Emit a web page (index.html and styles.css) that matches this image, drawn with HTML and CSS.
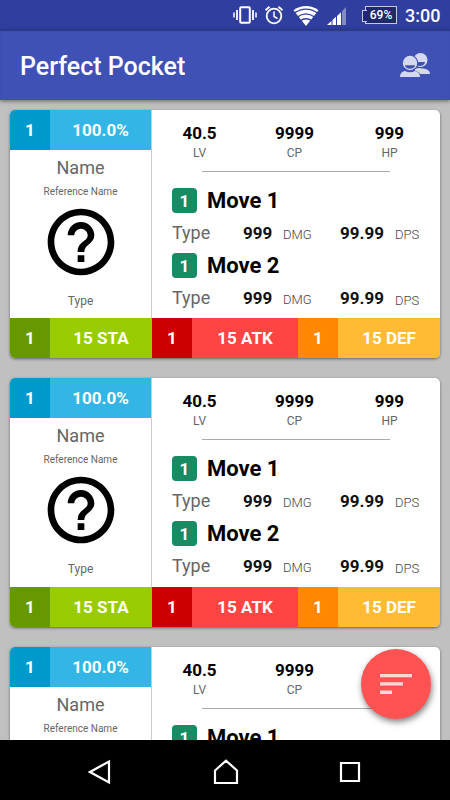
FILE: index.html
```
<!DOCTYPE html>
<html lang="en">
<head>
    <meta charset="UTF-8">
    <meta name="viewport" content="width=device-width, initial-scale=1.0">
    <title>Perfect Pocket</title>
    <link rel="stylesheet" href="styles.css">
</head>
<body>

    <div class="statusbar">
        <svg class="vibrate" width="24" height="20" viewBox="0 0 24 20" fill="none" stroke="#fff">
            <rect x="7.2" y="2.2" width="9.6" height="15.6" rx="1" stroke-width="2"/>
            <path d="M4 5v10M20 5v10" stroke-width="1.8"/>
            <path d="M1 7.5v5M23 7.5v5" stroke-width="1.5"/>
        </svg>
        <svg class="alarm" width="20" height="20" viewBox="0 0 20 20" fill="none" stroke="#fff">
            <circle cx="10" cy="11" r="7.3" stroke-width="1.8"/>
            <path d="M10 6.5v5l3.5 2" stroke-width="1.5"/>
            <path d="M1.5 5.3l4-3.5M18.5 5.3l-4-3.5" stroke-width="1.8"/>
        </svg>
        <svg class="wifi" width="26" height="20" viewBox="0 0 26 20">
            <path d="M13 20L.5 4.2Q13-4.2 25.5 4.2z" fill="#fff"/>
            <path d="M1 7.2Q13-1 25 7.2M4 11.2Q13 4.5 22 11.2M7 15Q13 10.5 19 15" fill="none" stroke="#303f9f" stroke-width="1.4"/>
        </svg>
        <svg class="signal" width="20" height="20" viewBox="0 0 20 20" fill="#fff">
            <path d="M0 19l4.5-4v4zM5.5 14l3.5-3.2V19H5.5zM10 10l4-3.7V19h-4z"/>
            <path d="M15 5.3L19 1v18h-4z" opacity=".4"/>
        </svg>
        <div class="battery">69%</div>
        <div class="clock">3:00</div>
    </div>

    <div class="toolbar">
        <h1>Perfect Pocket</h1>
        <svg width="30" height="26" viewBox="0 0 30 26">
            <g fill="#d5d9ef">
                <circle cx="20.5" cy="8" r="7"/>
                <path d="M15 22v-5q3-1.500 8-.5c4 .5 7 2 7 5.500z"/>
            </g>
            <path d="M15 10h10a5 4 0 0 1-10 0z" fill="#3f51b5"/>
            <circle cx="10" cy="11" r="8.2" fill="#3f51b5"/>
            <path d="M10 18c6 0 10.800 2 10.800 7H10z" fill="#3f51b5"/>
            <g fill="#d5d9ef">
                <circle cx="10" cy="11" r="7.200"/>
                <path d="M0 25c0-4 2.500-5.500 5-6q5 2.400 10 0c2.500.5 5 2 5 6z"/>
            </g>
            <path d="M5 13.200h10a5 3.600 0 0 1-10 0z" fill="#3f51b5"/>
        </svg>
    </div>

    <div class="list">
        <div class="card">
            <div class="main">
                <div class="left">
                    <div class="perfection"><span class="rank">1</span><span class="percent">100.0%</span></div>
                    <div class="name">Name</div>
                    <div class="reference">Reference Name</div>
                    <svg class="unknown" viewBox="0 0 24 24"><path d="M11 18h2v-2h-2v2zm1-16C6.480 2 2 6.480 2 12s4.480 10 10 10 10-4.480 10-10S17.520 2 12 2zm0 18c-4.410 0-8-3.590-8-8s3.590-8 8-8 8 3.590 8 8-3.590 8-8 8zm0-14c-2.210 0-4 1.790-4 4h2c0-1.100.9-2 2-2s2 .9 2 2c0 2-3 1.750-3 5h2c0-2.250 3-2.500 3-5 0-2.210-1.790-4-4-4z"/></svg>
                    <div class="type">Type</div>
                </div>
                <div class="right">
                    <div class="stats">
                        <div><b>40.5</b><span>LV</span></div>
                        <div><b>9999</b><span>CP</span></div>
                        <div><b>999</b><span>HP</span></div>
                    </div>
                    <div class="divider"></div>
                    <div class="move"><span class="badge">1</span>Move 1</div>
                    <div class="damage"><span>Type</span><b>999</b><small>DMG</small><b>99.99</b><small>DPS</small></div>
                    <div class="move"><span class="badge">1</span>Move 2</div>
                    <div class="damage last"><span>Type</span><b>999</b><small>DMG</small><b>99.99</b><small>DPS</small></div>
                </div>
            </div>
            <div class="ivs">
                <span class="sta-rank">1</span><span class="sta">15 STA</span>
                <span class="atk-rank">1</span><span class="atk">15 ATK</span>
                <span class="def-rank">1</span><span class="def">15 DEF</span>
            </div>
        </div>

        <div class="card">
            <div class="main">
                <div class="left">
                    <div class="perfection"><span class="rank">1</span><span class="percent">100.0%</span></div>
                    <div class="name">Name</div>
                    <div class="reference">Reference Name</div>
                    <svg class="unknown" viewBox="0 0 24 24"><path d="M11 18h2v-2h-2v2zm1-16C6.480 2 2 6.480 2 12s4.480 10 10 10 10-4.480 10-10S17.520 2 12 2zm0 18c-4.410 0-8-3.590-8-8s3.590-8 8-8 8 3.590 8 8-3.590 8-8 8zm0-14c-2.210 0-4 1.790-4 4h2c0-1.100.9-2 2-2s2 .9 2 2c0 2-3 1.750-3 5h2c0-2.250 3-2.500 3-5 0-2.210-1.790-4-4-4z"/></svg>
                    <div class="type">Type</div>
                </div>
                <div class="right">
                    <div class="stats">
                        <div><b>40.5</b><span>LV</span></div>
                        <div><b>9999</b><span>CP</span></div>
                        <div><b>999</b><span>HP</span></div>
                    </div>
                    <div class="divider"></div>
                    <div class="move"><span class="badge">1</span>Move 1</div>
                    <div class="damage"><span>Type</span><b>999</b><small>DMG</small><b>99.99</b><small>DPS</small></div>
                    <div class="move"><span class="badge">1</span>Move 2</div>
                    <div class="damage last"><span>Type</span><b>999</b><small>DMG</small><b>99.99</b><small>DPS</small></div>
                </div>
            </div>
            <div class="ivs">
                <span class="sta-rank">1</span><span class="sta">15 STA</span>
                <span class="atk-rank">1</span><span class="atk">15 ATK</span>
                <span class="def-rank">1</span><span class="def">15 DEF</span>
            </div>
        </div>

        <div class="card">
            <div class="main">
                <div class="left">
                    <div class="perfection"><span class="rank">1</span><span class="percent">100.0%</span></div>
                    <div class="name">Name</div>
                    <div class="reference">Reference Name</div>
                </div>
                <div class="right">
                    <div class="stats">
                        <div><b>40.5</b><span>LV</span></div>
                        <div><b>9999</b><span>CP</span></div>
                        <div><b>999</b><span>HP</span></div>
                    </div>
                    <div class="divider"></div>
                    <div class="move"><span class="badge">1</span>Move 1</div>
                </div>
            </div>
        </div>

        <button class="fab" aria-label="Sort">
            <svg width="32" height="20" viewBox="0 0 32 20" fill="#ffd9d9"><path d="M0 0h32v3.300H0zM0 8.300h23v3.300H0zM0 16.600h12v3.400H0z"/></svg>
        </button>
    </div>

    <div class="navbar">
        <svg width="24" height="26" viewBox="0 0 24 26"><path d="M21 2.500v21L2 13z"/></svg>
        <svg width="26" height="26" viewBox="0 0 26 26"><path d="M2 11.500L13 1.700l11 9.800V24H2z"/></svg>
        <svg width="22" height="22" viewBox="0 0 22 22"><path d="M2 2h18v18H2z"/></svg>
    </div>

</body>
</html>
```

FILE: styles.css
```
* {
    box-sizing: border-box;
}
body {
    margin: 0;
    height: 800px;
    display: flex;
    flex-direction: column;
    overflow: hidden;
    font-family: Roboto, sans-serif;
    background-color: #c0c0c0;
}
svg {
    display: block;
    flex: none;
}
.statusbar {
    height: 30px;
    flex: none;
    display: flex;
    align-items: center;
    padding-left: 233px;
    background-color: #303f9f;
    color: #fff;
}
.alarm {
    margin-left: 7px;
}
.wifi {
    margin-left: 9px;
    margin-top: 2px;
}
.signal {
    margin-left: 8px;
    margin-top: 2px;
}
.battery {
    width: 32px;
    height: 18px;
    margin-left: 18px;
    border: 1px solid #c5c9e5;
    background-color: #20296b;
    font-size: 12px;
    font-weight: 500;
    line-height: 17px;
    text-align: center;
    position: relative;
}
.battery::before {
    content: "";
    position: absolute;
    left: -4px;
    top: 3px;
    width: 4px;
    height: 10px;
    border: 1px solid #c5c9e5;
    border-right: 0;
    background-color: #20296b;
}
.clock {
    margin-left: 8px;
    font-size: 18px;
    font-weight: 500;
}
.toolbar {
    height: 70px;
    flex: none;
    display: flex;
    align-items: center;
    justify-content: space-between;
    padding: 0 20px;
    background-color: #3f51b5;
    box-shadow: inset 0 1px 1px #2b3887, 0 1px 4px rgba(0, 0, 0, 0.5);
    z-index: 1;
}
.toolbar h1 {
    margin: 3px 0 0;
    color: #fff;
    font-size: 25px;
    font-weight: 500;
}
.list {
    position: relative;
    height: 640px;
    flex: none;
    display: flex;
    flex-direction: column;
    gap: 20px;
    padding: 10px;
    overflow: hidden;
}
.card {
    height: 248.4px;
    flex: none;
    display: flex;
    flex-direction: column;
    border-radius: 5px;
    overflow: hidden;
    background-color: #fff;
    box-shadow: 0 1px 3px rgba(0, 0, 0, 0.5);
}
.main {
    flex: 1;
    display: flex;
}
.left {
    width: 142px;
    border-right: 1px solid #ccc;
    color: #666;
    text-align: center;
}
.perfection {
    display: flex;
    height: 40px;
    line-height: 41px;
    color: #fff;
    font-size: 17px;
    font-weight: 700;
}
.rank {
    width: 40px;
    background-color: #0099cc;
}
.percent {
    flex: 1;
    background-color: #33b5e5;
}
.name {
    margin-top: 6px;
    font-size: 18px;
    line-height: 24px;
}
.reference {
    margin-top: 5px;
    font-size: 10px;
    line-height: 14px;
}
.unknown {
    width: 80px;
    height: 80px;
    margin: 3px auto 0;
}
.type {
    margin-top: 11px;
    font-size: 12px;
    line-height: 16px;
}
.right {
    flex: 1;
}
.stats {
    display: grid;
    grid-template-columns: repeat(3, 1fr);
    padding: 12px 3px 0 0;
    text-align: center;
}
.stats b {
    display: block;
    font-size: 17px;
    line-height: 22px;
}
.stats span {
    display: block;
    color: #666;
    font-size: 12px;
    line-height: 18px;
}
.divider {
    width: 188px;
    height: 1px;
    margin: 9px 0 15px 50px;
    background-color: #aaa;
}
.move {
    display: flex;
    align-items: center;
    gap: 10px;
    height: 27px;
    padding-left: 20px;
    font-size: 22px;
    font-weight: 700;
}
.badge {
    width: 25px;
    height: 25px;
    border-radius: 4px;
    background-color: #198b63;
    color: #fff;
    font-size: 17px;
    line-height: 26px;
    text-align: center;
}
.damage {
    display: grid;
    grid-template-columns: 71px 40px 57px 55px 1fr;
    align-items: baseline;
    height: 38px;
    padding-left: 20px;
    line-height: 37px;
    color: #666;
    font-size: 18px;
}
.damage b {
    color: #111;
    font-size: 17px;
}
.damage small {
    font-size: 13px;
    font-weight: 300;
    color: #444;
}
.damage.last small:last-child {
    padding-top: 3px;
    align-self: start;
}
.ivs {
    height: 40px;
    display: grid;
    grid-template-columns: 40px 102px 40px 106px 40px 102px;
    color: #fff;
    font-size: 17px;
    font-weight: 700;
    line-height: 41px;
    text-align: center;
}
.sta-rank {
    background-color: #669900;
}
.sta {
    background-color: #99cc00;
}
.atk-rank {
    background-color: #cc0000;
}
.atk {
    background-color: #ff4444;
}
.def-rank {
    background-color: #ff8800;
}
.def {
    background-color: #ffbb33;
}
/* floating sort button */
.fab {
    position: absolute;
    right: 19px;
    bottom: 21px;
    width: 70px;
    height: 70px;
    display: flex;
    align-items: center;
    justify-content: center;
    padding: 0;
    border: 0;
    border-radius: 50%;
    background-color: #ff5252;
    box-shadow: 1px 3px 6px rgba(0, 0, 0, 0.5);
}
.navbar {
    height: 60px;
    flex: none;
    display: flex;
    align-items: center;
    justify-content: space-between;
    padding: 4px 89px 0 88px;
    background-color: #000;
}
.navbar path {
    fill: none;
    stroke: #fff;
    stroke-width: 2.2;
}
```
